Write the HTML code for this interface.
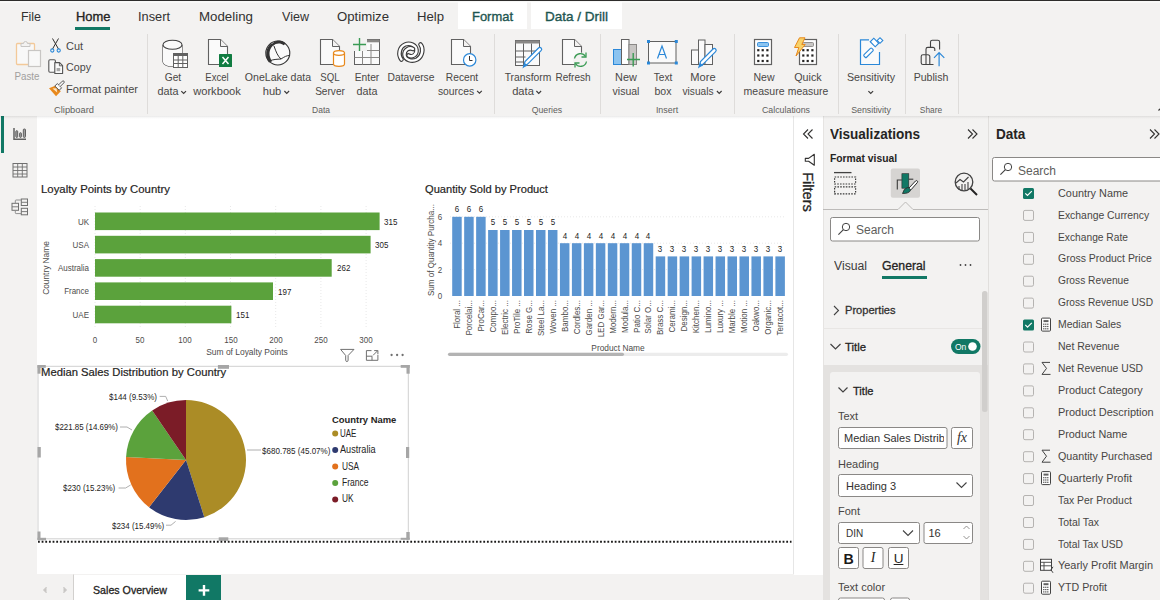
<!DOCTYPE html><html><head><meta charset="utf-8"><style>
html,body{margin:0;padding:0}
body{width:1160px;height:600px;overflow:hidden;position:relative;background:#f3f2f1;font-family:"Liberation Sans", sans-serif}
.t{position:absolute;line-height:0;white-space:nowrap}
.r{position:absolute;display:block}
</style></head><body>
<div class="r" style="left:0px;top:0px;width:1160px;height:1.4px;background:#2d2c2b;"></div>
<div class="r" style="left:0px;top:1.4px;width:1160px;height:1.2px;background:#f8f8f7;"></div>
<div class="r" style="left:75px;top:27px;width:35px;height:3px;background:#117865;"></div>
<div class="r" style="left:458px;top:2px;width:69px;height:27px;background:#ffffff;"></div>
<div class="r" style="left:531px;top:2px;width:90.5px;height:27px;background:#ffffff;"></div>
<div class="r" style="left:147px;top:34px;width:1px;height:80px;background:#dedcda;"></div>
<div class="r" style="left:494px;top:34px;width:1px;height:80px;background:#dedcda;"></div>
<div class="r" style="left:600px;top:34px;width:1px;height:80px;background:#dedcda;"></div>
<div class="r" style="left:734px;top:34px;width:1px;height:80px;background:#dedcda;"></div>
<div class="r" style="left:838px;top:34px;width:1px;height:80px;background:#dedcda;"></div>
<div class="r" style="left:904.5px;top:34px;width:1px;height:80px;background:#dedcda;"></div>
<div class="r" style="left:958px;top:34px;width:1px;height:80px;background:#dedcda;"></div>
<svg class="r" style="left:0;top:0" width="1160" height="120" viewBox="0 0 1160 120"><rect x="16.5" y="43.5" width="18" height="21" rx="1" fill="#f8f8f8" stroke="#f3c999" stroke-width="1.3"/><path d="M21 46.5 h9 v-3 h-2.5 a2 2 0 0 0 -4 0 h-2.5z" fill="#f3f2f1" stroke="#c8c6c4" stroke-width="1"/><rect x="28.5" y="50.5" width="12" height="16" fill="#f8f8f8" stroke="#c8c6c4" stroke-width="1.2"/><path d="M52.5 38.5 L58.5 49 M58.5 38.5 L52.5 49" stroke="#323130" stroke-width="1" fill="none"/><circle cx="52.3" cy="50.5" r="1.6" fill="none" stroke="#2b88d8" stroke-width="1.1"/><circle cx="58.7" cy="50.5" r="1.6" fill="none" stroke="#2b88d8" stroke-width="1.1"/><rect x="48.8" y="59.8" width="6.6" height="12.4" rx="1.2" fill="#fafafa" stroke="#555" stroke-width="1.1"/><path d="M54.8 62.6 H59.6 L62.6 65.6 V73.5 H54.8 Z" fill="#fafafa" stroke="#555" stroke-width="1.1" stroke-linejoin="round"/><path d="M59.4 62.8 V65.8 H62.4" fill="none" stroke="#555" stroke-width="0.9"/><rect x="56.6" y="68" width="3.6" height="3.2" fill="#a8a8a8"/><path d="M49 88.2 L55.2 85.8 L60.8 91.2 L56 96.2 Z" fill="#e8891c"/><path d="M52.5 88.5 L56.5 88.2 L57.2 92.5 Z" fill="#fde7c8"/><path d="M54.8 86 L57.3 83.6 L61.6 87.8 L59.2 90.3 Z" fill="#fafafa" stroke="#555" stroke-width="1"/><path d="M58.7 84.8 L62.3 81.2 a1.1 1.1 0 0 1 1.6 1.6 L60.3 86.4" fill="#fafafa" stroke="#555" stroke-width="1"/><path d="M163 45 v17 a9.5 4.5 0 0 0 10 4.3 M182 45 v8" fill="none" stroke="#424242" stroke-width="1.1"/><path d="M163 45 v17 a9.5 4.5 0 0 0 10 4.3 V53 H182 V45 z" fill="#fafafa"/><ellipse cx="172.5" cy="44.8" rx="9.5" ry="4.5" fill="#fafafa" stroke="#424242" stroke-width="1.1"/><rect x="173.5" y="53.5" width="14" height="14" fill="#fff" stroke="#616161" stroke-width="1"/><rect x="173.5" y="53.5" width="14" height="2.5" fill="#616161"/><path d="M178.2 56 v11.5 M182.8 56 v11.5 M173.5 60 h14 M173.5 63.5 h14" stroke="#616161" stroke-width="1"/><path d="M208.5 39.5 h12 l7 7 v18 h-19 z" fill="#fafafa" stroke="#616161" stroke-width="1.1"/><path d="M220.5 39.5 v7 h7" fill="#f3f2f1" stroke="#616161" stroke-width="1"/><rect x="219" y="54" width="13" height="13" rx="0.5" fill="#107c41"/><path d="M222.5 57 L228.5 64 M228.5 57 L222.5 64" stroke="#fff" stroke-width="1.5"/><circle cx="277.8" cy="53" r="12" fill="#fafafa" stroke="#333" stroke-width="1.1"/><path d="M271.5 43.5 C265.5 47 264.5 57 269 62.5 L272.2 61.3 C268.5 56.5 268.5 49.5 273 45.5 Z" fill="#333"/><path d="M271.5 44.5 C275 39.5 282.5 39 285.5 43.5 L283.8 45.2 C280.5 42.8 276 42.8 273 46 Z" fill="#333"/><path d="M274 46 C276 52 278 56.5 281 59 M269.5 61 C273 59.3 277 59.3 281 59 C284 57 287 55.3 289.6 55.5" fill="none" stroke="#333" stroke-width="1"/><path d="M320.5 39.5 h12 l7 7 v18 h-19 z" fill="#fafafa" stroke="#616161" stroke-width="1.1"/><path d="M332.5 39.5 v7 h7" fill="#f3f2f1" stroke="#616161" stroke-width="1"/><path d="M333.5 53 v11 a5.5 2.3 0 0 0 11 0 v-11 z" fill="#fff" stroke="#e8891c" stroke-width="1.2"/><ellipse cx="339" cy="53" rx="5.5" ry="2.3" fill="#fff" stroke="#e8891c" stroke-width="1.2"/><rect x="354.5" y="39.5" width="25" height="25" fill="#fafafa" stroke="#616161" stroke-width="1"/><rect x="362" y="39.5" width="17.5" height="2.8" fill="#8a8886"/><path d="M362.5 44 v20.5 M371 44 v20.5 M354.5 50.5 h25 M354.5 57.5 h25" stroke="#8a8886" stroke-width="1"/><rect x="351" y="37" width="16" height="14" fill="#f3f2f1"/><path d="M353 44.5 h13 M359.5 38 v13" stroke="#3a9b54" stroke-width="1.4"/><path d="M401.5 59.5 C398 55 399 47 405 44.5 C410 42.5 416 45 416.5 50 C417 55 412 57.5 408.5 55.5" fill="none" stroke="#3a3a3a" stroke-width="4.6" stroke-linecap="round"/><path d="M401.5 59.5 C398 55 399 47 405 44.5 C410 42.5 416 45 416.5 50 C417 55 412 57.5 408.5 55.5" fill="none" stroke="#fff" stroke-width="2.4" stroke-linecap="round"/><path d="M420.5 44.5 C423.5 48 423 56 417 59.5 C412 62 405 60 404.5 55 C404 50 409 47 413 49" fill="none" stroke="#3a3a3a" stroke-width="4.6" stroke-linecap="round"/><path d="M420.5 44.5 C423.5 48 423 56 417 59.5 C412 62 405 60 404.5 55 C404 50 409 47 413 49" fill="none" stroke="#fff" stroke-width="2.4" stroke-linecap="round"/><path d="M451.5 39.5 h12 l7 7 v18 h-19 z" fill="#fafafa" stroke="#616161" stroke-width="1.1"/><path d="M463.5 39.5 v7 h7" fill="#f3f2f1" stroke="#616161" stroke-width="1"/><circle cx="469.7" cy="59.9" r="6.2" fill="#fff" stroke="#2b88d8" stroke-width="1.2"/><path d="M469.5 56 v4.5 h3" fill="none" stroke="#333" stroke-width="1"/><rect x="515.5" y="40.5" width="24" height="25" fill="#fafafa" stroke="#616161" stroke-width="1"/><rect x="515.5" y="40.5" width="24" height="3" fill="#8a8886"/><path d="M523.5 43.5 v22 M531.5 43.5 v12 M515.5 51 h24 M515.5 57 h10 M515.5 62 h8" stroke="#616161" stroke-width="1"/><path d="M523.5 67 l1.5 -5.5 l13.5 -13.5 a1.8 1.8 0 0 1 2.6 2.6 l-13.5 13.5 z" fill="#fff" stroke="#2b88d8" stroke-width="1.2"/><path d="M523.5 67 l1.2 -4.2 l3 3z" fill="#2b88d8"/><path d="M562.5 39.5 h12 l7 7 v18 h-19 z" fill="#fafafa" stroke="#616161" stroke-width="1.1"/><path d="M574.5 39.5 v7 h7" fill="#f3f2f1" stroke="#616161" stroke-width="1"/><circle cx="580.5" cy="60" r="7.5" fill="#f3f2f1"/><path d="M574.5 58.5 a6 6 0 0 1 11 -2 M586.5 61.5 a6 6 0 0 1 -11 2" fill="none" stroke="#3a9b54" stroke-width="1.3"/><path d="M586 52.5 v4.5 h-4.5 M575 67.5 v-4.5 h4.5" fill="none" stroke="#3a9b54" stroke-width="1.3"/><rect x="613.5" y="49.5" width="8" height="15" fill="#8cc4f0" stroke="#2b88d8" stroke-width="1"/><rect x="621.5" y="39.5" width="7.5" height="25" fill="#fff" stroke="#616161" stroke-width="1"/><rect x="629" y="44.5" width="7.5" height="20" fill="#c8c6c4" stroke="#8a8886" stroke-width="1"/><rect x="626" y="52" width="14" height="14" fill="#f3f2f1" opacity="0"/><path d="M627 59.5 h13 M633.2 53 v13.5" stroke="#3a9b54" stroke-width="1.4"/><rect x="648.5" y="41.5" width="27.5" height="21.5" fill="#fafafa" stroke="#616161" stroke-width="1"/><rect x="647" y="40" width="3" height="3" fill="#2b88d8"/><rect x="674.8" y="40" width="3" height="3" fill="#2b88d8"/><rect x="647" y="61.5" width="3" height="3" fill="#2b88d8"/><rect x="674.8" y="61.5" width="3" height="3" fill="#2b88d8"/><path d="M657.5 58.5 L662 46 L666.5 58.5 M659 54.5 h6" fill="none" stroke="#2b88d8" stroke-width="1.2"/><rect x="691.5" y="50" width="7" height="14.5" fill="#fafafa" stroke="#616161" stroke-width="1"/><rect x="698.5" y="40" width="6.5" height="24.5" fill="#fafafa" stroke="#616161" stroke-width="1"/><rect x="705" y="44.5" width="7.5" height="20" fill="#fafafa" stroke="#616161" stroke-width="1"/><path d="M699 67 l1.5 -5.5 l12.5 -12.5 a1.8 1.8 0 0 1 2.6 2.6 l-12.5 12.5 z" fill="#fff" stroke="#2b88d8" stroke-width="1.2"/><path d="M699 67 l1.2 -4.2 l3 3z" fill="#2b88d8"/><rect x="754.5" y="39.5" width="17" height="25" fill="#fff" stroke="#616161" stroke-width="1.2"/><rect x="757.5" y="42.5" width="11" height="4" rx="1" fill="#8cc4f0" stroke="#2b88d8" stroke-width="0.9"/><rect x="757.1999999999999" y="49.1" width="2.2" height="2.2" fill="#252423"/><rect x="761.6" y="49.1" width="2.2" height="2.2" fill="#252423"/><rect x="766.3" y="49.1" width="2.2" height="2.2" fill="#252423"/><rect x="757.1999999999999" y="54.4" width="2.2" height="2.2" fill="#252423"/><rect x="761.6" y="54.4" width="2.2" height="2.2" fill="#252423"/><rect x="766.3" y="54.4" width="2.2" height="2.2" fill="#252423"/><rect x="757.1999999999999" y="59.9" width="2.2" height="2.2" fill="#252423"/><rect x="761.6" y="59.9" width="2.2" height="2.2" fill="#252423"/><rect x="766.3" y="59.9" width="2.2" height="2.2" fill="#252423"/><rect x="799.5" y="39.5" width="17" height="25" fill="#fff" stroke="#616161" stroke-width="1.2"/><rect x="802.5" y="42.5" width="11" height="4" rx="1" fill="#c8c6c4" stroke="#8a8886" stroke-width="0.9"/><rect x="802.1999999999999" y="49.1" width="2.2" height="2.2" fill="#252423"/><rect x="806.6" y="49.1" width="2.2" height="2.2" fill="#252423"/><rect x="811.3" y="49.1" width="2.2" height="2.2" fill="#252423"/><rect x="802.1999999999999" y="54.4" width="2.2" height="2.2" fill="#252423"/><rect x="806.6" y="54.4" width="2.2" height="2.2" fill="#252423"/><rect x="811.3" y="54.4" width="2.2" height="2.2" fill="#252423"/><rect x="802.1999999999999" y="59.9" width="2.2" height="2.2" fill="#252423"/><rect x="806.6" y="59.9" width="2.2" height="2.2" fill="#252423"/><rect x="811.3" y="59.9" width="2.2" height="2.2" fill="#252423"/><path d="M799.5 37.8 L805 37.8 L801.8 44.5 L805.2 44.5 L796 56 L798.8 47.5 L794.5 47.5 z" fill="#f7d26a" stroke="#e8891c" stroke-width="1" stroke-linejoin="round"/><path d="M869 39.8 H860.5 V64.5 H879.5 V52" fill="#fafafa" stroke="#2b88d8" stroke-width="1.2"/><path d="M864.5 50 l6 -6 l4.5 4.5 l-6 6 z" fill="#fafafa"/><rect x="863" y="51" width="11" height="3.6" rx="1" transform="rotate(-45 868.5 52.8)" fill="#fff" stroke="#2b88d8" stroke-width="1.1"/><rect x="871" y="40" width="7" height="5" transform="rotate(45 874.5 42.5)" fill="#fff" stroke="#2b88d8" stroke-width="1.2"/><rect x="878" y="38.5" width="4" height="4" transform="rotate(45 880 40.5)" fill="#fff" stroke="#2b88d8" stroke-width="1.1"/><path d="M930.5 52 V42 a1.8 1.8 0 0 1 1.8 -1.8 H937.8 a1.8 1.8 0 0 1 1.8 1.8 V49.5" fill="none" stroke="#424242" stroke-width="1.1"/><path d="M926 55 V49.2 a1.8 1.8 0 0 1 1.8 -1.8 H933 a1.8 1.8 0 0 1 1.8 1.8 V51" fill="#f3f2f1" stroke="#424242" stroke-width="1.1"/><path d="M933.5 64.5 H923 a1.8 1.8 0 0 1 -1.8 -1.8 V56.6 a1.8 1.8 0 0 1 1.8 -1.8 H928 a1.8 1.8 0 0 1 1.8 1.8 V64.5" fill="#f3f2f1" stroke="#424242" stroke-width="1.1"/><path d="M926 55 V64.5" stroke="#424242" stroke-width="1.1"/><path d="M939.1 66.2 V53 M934 57.8 L939.1 52.6 L944.3 57.8" fill="none" stroke="#2b88d8" stroke-width="1.2"/><path d="M181.3 91.10000000000001 l2.35 2.35 l2.35 -2.35" fill="none" stroke="#3b3a39" stroke-width="1.15"/><path d="M284.4 91.0 l2.35 2.35 l2.35 -2.35" fill="none" stroke="#3b3a39" stroke-width="1.15"/><path d="M477.09999999999997 90.9 l2.35 2.35 l2.35 -2.35" fill="none" stroke="#3b3a39" stroke-width="1.15"/><path d="M536.4 91.0 l2.35 2.35 l2.35 -2.35" fill="none" stroke="#3b3a39" stroke-width="1.15"/><path d="M716.9 91.0 l2.35 2.35 l2.35 -2.35" fill="none" stroke="#3b3a39" stroke-width="1.15"/><path d="M868.4 91.10000000000001 l2.35 2.35 l2.35 -2.35" fill="none" stroke="#3b3a39" stroke-width="1.15"/></svg>
<div class="r" style="left:0px;top:116px;width:37px;height:458px;background:#f3f2f1;"></div>
<div class="r" style="left:1px;top:116px;width:3px;height:37px;background:#117865;"></div>
<svg class="r" style="left:0;top:0" width="40" height="230" viewBox="0 0 40 230"><path d="M14 128 v11.3 h12" fill="none" stroke="#616161" stroke-width="1.5"/><rect x="15.8" y="130.7" width="1.9" height="6.7" rx="0.8" fill="#a0a0a0" stroke="#555" stroke-width="0.9"/><rect x="19.6" y="132.7" width="1.8" height="4.7" rx="0.8" fill="#a0a0a0" stroke="#555" stroke-width="0.9"/><rect x="23.3" y="129" width="2.2" height="8.4" rx="0.9" fill="#a0a0a0" stroke="#555" stroke-width="0.9"/><rect x="13" y="163.5" width="14" height="13.5" fill="none" stroke="#707070" stroke-width="1"/><path d="M13 167 h14 M13 170.5 h14 M13 174 h14 M17.7 163.5 v13.5 M22.3 163.5 v13.5" stroke="#707070" stroke-width="0.9"/><rect x="12" y="203.3" width="6.5" height="7" fill="none" stroke="#707070" stroke-width="1"/><path d="M12 206.8 h6.5" stroke="#707070" stroke-width="0.9"/><rect x="21.3" y="199" width="6.2" height="6.5" fill="none" stroke="#707070" stroke-width="1"/><path d="M21.3 202.3 h6.2" stroke="#707070" stroke-width="0.9"/><rect x="21.3" y="208.3" width="6.2" height="6.5" fill="none" stroke="#707070" stroke-width="1"/><path d="M21.3 211.6 h6.2" stroke="#707070" stroke-width="0.9"/><path d="M15.3 203.3 v-2.5 q0 -0.8 0.8 -0.8 h5.2 M15.3 210.3 v2.5 q0 0.8 0.8 0.8 h5.2" fill="none" stroke="#909090" stroke-width="1"/></svg>
<div class="r" style="left:37px;top:116px;width:756px;height:458px;background:#ffffff;"></div>
<div class="r" style="left:793px;top:116px;width:1px;height:458px;background:#e6e6e6;"></div>
<svg class="r" style="left:0;top:0" width="1160" height="600" viewBox="0 0 1160 600"><line x1="95.0" y1="206" x2="95.0" y2="328" stroke="#e8e8e8" stroke-width="1" stroke-dasharray="1 2"/><line x1="140.2" y1="206" x2="140.2" y2="328" stroke="#e8e8e8" stroke-width="1" stroke-dasharray="1 2"/><line x1="185.3" y1="206" x2="185.3" y2="328" stroke="#e8e8e8" stroke-width="1" stroke-dasharray="1 2"/><line x1="230.5" y1="206" x2="230.5" y2="328" stroke="#e8e8e8" stroke-width="1" stroke-dasharray="1 2"/><line x1="275.7" y1="206" x2="275.7" y2="328" stroke="#e8e8e8" stroke-width="1" stroke-dasharray="1 2"/><line x1="320.9" y1="206" x2="320.9" y2="328" stroke="#e8e8e8" stroke-width="1" stroke-dasharray="1 2"/><line x1="366.1" y1="206" x2="366.1" y2="328" stroke="#e8e8e8" stroke-width="1" stroke-dasharray="1 2"/><rect x="95.0" y="212.5" width="284.6" height="17.6" fill="#5ba23c"/><rect x="95.0" y="235.8" width="275.6" height="17.6" fill="#5ba23c"/><rect x="95.0" y="259.1" width="236.7" height="17.6" fill="#5ba23c"/><rect x="95.0" y="282.4" width="178.0" height="17.6" fill="#5ba23c"/><rect x="95.0" y="305.7" width="136.4" height="17.6" fill="#5ba23c"/><line x1="450" y1="269.6" x2="786" y2="269.6" stroke="#e8e8e8" stroke-width="1" stroke-dasharray="1 2"/><line x1="450" y1="243.2" x2="786" y2="243.2" stroke="#e8e8e8" stroke-width="1" stroke-dasharray="1 2"/><line x1="450" y1="216.8" x2="786" y2="216.8" stroke="#e8e8e8" stroke-width="1" stroke-dasharray="1 2"/><rect x="452.20" y="216.8" width="9.5" height="79.2" fill="#5b95d1"/><rect x="464.17" y="216.8" width="9.5" height="79.2" fill="#5b95d1"/><rect x="476.14" y="216.8" width="9.5" height="79.2" fill="#5b95d1"/><rect x="488.11" y="230.0" width="9.5" height="66.0" fill="#5b95d1"/><rect x="500.08" y="230.0" width="9.5" height="66.0" fill="#5b95d1"/><rect x="512.05" y="230.0" width="9.5" height="66.0" fill="#5b95d1"/><rect x="524.02" y="230.0" width="9.5" height="66.0" fill="#5b95d1"/><rect x="535.99" y="230.0" width="9.5" height="66.0" fill="#5b95d1"/><rect x="547.96" y="230.0" width="9.5" height="66.0" fill="#5b95d1"/><rect x="559.93" y="243.2" width="9.5" height="52.8" fill="#5b95d1"/><rect x="571.90" y="243.2" width="9.5" height="52.8" fill="#5b95d1"/><rect x="583.87" y="243.2" width="9.5" height="52.8" fill="#5b95d1"/><rect x="595.84" y="243.2" width="9.5" height="52.8" fill="#5b95d1"/><rect x="607.81" y="243.2" width="9.5" height="52.8" fill="#5b95d1"/><rect x="619.78" y="243.2" width="9.5" height="52.8" fill="#5b95d1"/><rect x="631.75" y="243.2" width="9.5" height="52.8" fill="#5b95d1"/><rect x="643.72" y="243.2" width="9.5" height="52.8" fill="#5b95d1"/><rect x="655.69" y="256.4" width="9.5" height="39.6" fill="#5b95d1"/><rect x="667.66" y="256.4" width="9.5" height="39.6" fill="#5b95d1"/><rect x="679.63" y="256.4" width="9.5" height="39.6" fill="#5b95d1"/><rect x="691.60" y="256.4" width="9.5" height="39.6" fill="#5b95d1"/><rect x="703.57" y="256.4" width="9.5" height="39.6" fill="#5b95d1"/><rect x="715.54" y="256.4" width="9.5" height="39.6" fill="#5b95d1"/><rect x="727.51" y="256.4" width="9.5" height="39.6" fill="#5b95d1"/><rect x="739.48" y="256.4" width="9.5" height="39.6" fill="#5b95d1"/><rect x="751.45" y="256.4" width="9.5" height="39.6" fill="#5b95d1"/><rect x="763.42" y="256.4" width="9.5" height="39.6" fill="#5b95d1"/><rect x="775.39" y="256.4" width="9.5" height="39.6" fill="#5b95d1"/><rect x="448" y="352.7" width="340" height="3.2" rx="1.6" fill="#ececec"/><rect x="448" y="352.7" width="176" height="3.2" rx="1.6" fill="#b3b3b3"/><path d="M186.0 460.0 L186.00 400.00 A60.0 60.0 0 0 1 204.31 517.14 Z" fill="#ab8c26"/><path d="M186.0 460.0 L204.31 517.14 A60.0 60.0 0 0 1 149.07 507.28 Z" fill="#2e3a6f"/><path d="M186.0 460.0 L149.07 507.28 A60.0 60.0 0 0 1 126.07 457.05 Z" fill="#e2711d"/><path d="M186.0 460.0 L126.07 457.05 A60.0 60.0 0 0 1 152.18 410.44 Z" fill="#5ba23c"/><path d="M186.0 460.0 L152.18 410.44 A60.0 60.0 0 0 1 186.00 400.00 Z" fill="#7b1c27"/><path d="M159.7 396.4 h6 l2 4.6 M120 427 h7 l5 3 M118.6 488 h7 l5 -3 M166 525.2 h5 l4.6 -3.8 M247 450 h14" fill="none" stroke="#9a9a9a" stroke-width="0.8"/><circle cx="335.2" cy="433.6" r="3" fill="#ab8c26"/><circle cx="335.2" cy="450.1" r="3" fill="#2e3a6f"/><circle cx="335.2" cy="466.5" r="3" fill="#e2711d"/><circle cx="335.2" cy="483.0" r="3" fill="#5ba23c"/><circle cx="335.2" cy="499.4" r="3" fill="#7b1c27"/><rect x="38" y="366.3" width="370.3" height="172.5" fill="none" stroke="#d0d0d0" stroke-width="1"/><rect x="37.5" y="365" width="8.3" height="2.8" fill="#a6a6a6"/><rect x="37.5" y="365" width="3" height="8.7" fill="#a6a6a6"/><rect x="400.7" y="365" width="9" height="2.8" fill="#a6a6a6"/><rect x="406.5" y="365" width="3.2" height="8.7" fill="#a6a6a6"/><rect x="37.5" y="531.5" width="3" height="8.5" fill="#a6a6a6"/><rect x="37.5" y="537.8" width="8.5" height="2.5" fill="#a6a6a6"/><rect x="406.3" y="532" width="3.4" height="7.6" fill="#a6a6a6"/><rect x="400.7" y="537.8" width="9" height="2" fill="#a6a6a6"/><rect x="217.9" y="365" width="11.1" height="3.8" fill="#a6a6a6"/><rect x="218.7" y="537.3" width="9.6" height="3.5" fill="#a6a6a6"/><rect x="37.5" y="447" width="3.3" height="10.5" fill="#a6a6a6"/><rect x="406" y="447" width="3.2" height="11" fill="#a6a6a6"/><line x1="38" y1="541.8" x2="791.5" y2="541.8" stroke="#1b1a19" stroke-width="1.9" stroke-dasharray="1.8 1.85"/><path d="M340.6 349.4 H354 L348.1 355.5 V360.3 a1.2 1.2 0 0 1 -2.4 0 V355.5 Z" fill="none" stroke="#707070" stroke-width="1" stroke-linejoin="round"/><path d="M371.5 350.6 H366.4 V360.3 H377.9 V355 M366.4 356.2 H372 V360.3 M373 355.4 L377.6 350.8 M374.2 350.6 H377.9 V354.3" fill="none" stroke="#707070" stroke-width="1"/><circle cx="391.6" cy="355" r="1.15" fill="#707070"/><circle cx="397.1" cy="355" r="1.15" fill="#707070"/><circle cx="402.6" cy="355" r="1.15" fill="#707070"/></svg>
<div class="r" style="left:794px;top:116px;width:29px;height:484px;background:#ffffff;"></div>
<div class="r" style="left:823px;top:116px;width:165px;height:484px;background:#f3f2f1;"></div>
<div class="r" style="left:822.5px;top:116px;width:1px;height:484px;background:#e6e4e2;"></div>
<div class="r" style="left:882px;top:276px;width:45px;height:2.5px;background:#117865;"></div>
<div class="r" style="left:823px;top:328px;width:159px;height:1px;background:#e8e6e4;"></div>
<div class="r" style="left:823px;top:365px;width:165px;height:235px;background:#e4e2e0;"></div>
<div class="r" style="left:988px;top:116px;width:172px;height:484px;background:#f3f2f1;"></div>
<div class="r" style="left:988px;top:116px;width:1px;height:484px;background:#e1dfdd;"></div>
<svg class="r" style="left:0;top:0" width="1160" height="600" viewBox="0 0 1160 600"><path d="M808 129.5 l-4.5 4.5 l4.5 4.5 M812.5 129.5 l-4.5 4.5 l4.5 4.5" fill="none" stroke="#323130" stroke-width="1.1"/><path d="M814.3 154.3 V165.3 L808.6 161.2 H805.3 V158.4 H808.6 Z" fill="none" stroke="#323130" stroke-width="1.1" stroke-linejoin="round"/><path d="M968 129.5 l4.5 4.5 l-4.5 4.5 M972.5 129.5 l4.5 4.5 l-4.5 4.5" fill="none" stroke="#323130" stroke-width="1.1"/><path d="M834 172.6 h17.5" stroke="#424242" stroke-width="1.3"/><rect x="834.6" y="177" width="21" height="7" fill="none" stroke="#3a3a3a" stroke-width="1.2" stroke-dasharray="1.6 1.2"/><rect x="834.6" y="186.8" width="21" height="7" fill="none" stroke="#3a3a3a" stroke-width="1.2" stroke-dasharray="1.6 1.2"/><rect x="890.8" y="168.5" width="29.2" height="29.2" rx="2" fill="#d6d4d2"/><path d="M897.3 189.5 v-9.5 h4.5" fill="none" stroke="#3a3a3a" stroke-width="1.1"/><rect x="901.9" y="173.7" width="6.9" height="14.5" fill="#117865" stroke="#2a2a2a" stroke-width="0.6"/><path d="M908.8 179.2 h4.5" fill="none" stroke="#3a3a3a" stroke-width="1.1"/><path d="M909 188 l6.5 -7 a1.2 1.2 0 0 1 1.8 1.6 l-6.3 7.2" fill="#fff" stroke="#2a2a2a" stroke-width="1"/><path d="M902.5 193.5 q1 -5 5.5 -6.2 l2.8 2.5 q-1.5 4 -8.3 3.7z" fill="#117865" stroke="#2a2a2a" stroke-width="0.8"/><circle cx="964" cy="182" r="8.8" fill="none" stroke="#424242" stroke-width="1.3"/><path d="M956 183 l4 -3.5 l3.5 2.5 l5 -5 M959 186 v4 M962 184 v6 M965 184 v6 M968 182 v7" fill="none" stroke="#424242" stroke-width="1.1"/><path d="M970.5 188.5 l6.5 6.5" stroke="#252423" stroke-width="2"/><path d="M823 209.5 H898 l7.5 -7.5 l7.5 7.5 H988" fill="none" stroke="#bdbbb9" stroke-width="1"/><rect x="830.5" y="217.5" width="149" height="23.5" rx="2" fill="#ffffff" stroke="#8a8886" stroke-width="1"/><circle cx="846" cy="227" r="3.7" fill="none" stroke="#424242" stroke-width="1"/><path d="M843.4 229.6 l-5 5" stroke="#424242" stroke-width="1.1"/><circle cx="960.5" cy="265" r="0.9" fill="#424242"/><circle cx="965.5" cy="265" r="0.9" fill="#424242"/><circle cx="970.5" cy="265" r="0.9" fill="#424242"/><path d="M834 306 l4.5 4.5 l-4.5 4.5" fill="none" stroke="#424242" stroke-width="1.1"/><path d="M830.5 344 l5 5 l5 -5" fill="none" stroke="#424242" stroke-width="1.2"/><rect x="951" y="339" width="29.5" height="15" rx="7.5" fill="#117865"/><circle cx="972.5" cy="346.5" r="4.3" fill="#fff"/><rect x="830" y="372" width="150" height="240" rx="3" fill="#f3f2f1"/><rect x="982" y="291" width="5.5" height="121" rx="2.5" fill="#d0cecc"/><path d="M838.5 387.5 l4.5 4.5 l4.5 -4.5" fill="none" stroke="#424242" stroke-width="1.2"/><rect x="838.5" y="427.5" width="108.5" height="21" rx="2" fill="#fff" stroke="#8a8886" stroke-width="1"/><rect x="951.5" y="427.5" width="21" height="21" rx="2" fill="#fff" stroke="#8a8886" stroke-width="1"/><rect x="838.5" y="474.5" width="134" height="22" rx="2" fill="#fff" stroke="#8a8886" stroke-width="1"/><path d="M956.5 482.5 l5 5 l5 -5" fill="none" stroke="#424242" stroke-width="1.1"/><rect x="838.5" y="522.5" width="81" height="21" rx="2" fill="#fff" stroke="#8a8886" stroke-width="1"/><path d="M903 530.5 l5 5 l5 -5" fill="none" stroke="#424242" stroke-width="1.1"/><rect x="924" y="522.5" width="48.5" height="21" rx="2" fill="#fff" stroke="#8a8886" stroke-width="1"/><path d="M963.5 529 l3 -3 l3 3 M963.5 536 l3 3 l3 -3" fill="none" stroke="#8a8886" stroke-width="0.9"/><rect x="838.5" y="547.5" width="20" height="21" rx="2" fill="#fff" stroke="#8a8886" stroke-width="1"/><rect x="863" y="547.5" width="20" height="21" rx="2" fill="#fff" stroke="#8a8886" stroke-width="1"/><rect x="888.5" y="547.5" width="20" height="21" rx="2" fill="#fff" stroke="#8a8886" stroke-width="1"/><rect x="838.5" y="598" width="46" height="10" rx="2" fill="#fff" stroke="#8a8886" stroke-width="1"/><rect x="890.5" y="598" width="19" height="10" rx="2" fill="#fff" stroke="#8a8886" stroke-width="1"/><path d="M1150 129.5 l4.5 4.5 l-4.5 4.5 M1154.5 129.5 l4.5 4.5 l-4.5 4.5" fill="none" stroke="#323130" stroke-width="1.1"/><rect x="992.5" y="157.5" width="180" height="23.5" rx="2" fill="#ffffff" stroke="#8a8886" stroke-width="1"/><circle cx="1008" cy="167" r="3.7" fill="none" stroke="#424242" stroke-width="1"/><path d="M1005.4 169.6 l-5 5" stroke="#424242" stroke-width="1.1"/><rect x="1023" y="188.0" width="11" height="11" rx="1.5" fill="#117865"/><path d="M1025.3 193.3 l2.2 2.2 l4.3 -4.3" fill="none" stroke="#fff" stroke-width="1.2"/><rect x="1023.5" y="210.4" width="10" height="10" rx="1.5" fill="none" stroke="#b5b3b1" stroke-width="1"/><rect x="1023.5" y="232.4" width="10" height="10" rx="1.5" fill="none" stroke="#b5b3b1" stroke-width="1"/><rect x="1023.5" y="254.3" width="10" height="10" rx="1.5" fill="none" stroke="#b5b3b1" stroke-width="1"/><rect x="1023.5" y="276.2" width="10" height="10" rx="1.5" fill="none" stroke="#b5b3b1" stroke-width="1"/><rect x="1023.5" y="298.1" width="10" height="10" rx="1.5" fill="none" stroke="#b5b3b1" stroke-width="1"/><rect x="1023" y="319.6" width="11" height="11" rx="1.5" fill="#117865"/><path d="M1025.3 324.9 l2.2 2.2 l4.3 -4.3" fill="none" stroke="#fff" stroke-width="1.2"/><rect x="1041.5" y="318.1" width="9" height="13" rx="1" fill="#fff" stroke="#424242" stroke-width="1"/><rect x="1043.5" y="320.1" width="5" height="2" fill="#616161"/><rect x="1043.2" y="323.6" width="1.2" height="1.2" fill="#424242"/><rect x="1045.2" y="323.6" width="1.2" height="1.2" fill="#424242"/><rect x="1047.2" y="323.6" width="1.2" height="1.2" fill="#424242"/><rect x="1043.2" y="325.9" width="1.2" height="1.2" fill="#424242"/><rect x="1045.2" y="325.9" width="1.2" height="1.2" fill="#424242"/><rect x="1047.2" y="325.9" width="1.2" height="1.2" fill="#424242"/><rect x="1043.2" y="328.2" width="1.2" height="1.2" fill="#424242"/><rect x="1045.2" y="328.2" width="1.2" height="1.2" fill="#424242"/><rect x="1047.2" y="328.2" width="1.2" height="1.2" fill="#424242"/><rect x="1023.5" y="342.0" width="10" height="10" rx="1.5" fill="none" stroke="#b5b3b1" stroke-width="1"/><rect x="1023.5" y="363.9" width="10" height="10" rx="1.5" fill="none" stroke="#b5b3b1" stroke-width="1"/><path d="M1050 362.4 h-8 l4.5 6 l-4.5 6 h8.5" fill="none" stroke="#424242" stroke-width="1"/><rect x="1023.5" y="385.9" width="10" height="10" rx="1.5" fill="none" stroke="#b5b3b1" stroke-width="1"/><rect x="1023.5" y="407.8" width="10" height="10" rx="1.5" fill="none" stroke="#b5b3b1" stroke-width="1"/><rect x="1023.5" y="429.7" width="10" height="10" rx="1.5" fill="none" stroke="#b5b3b1" stroke-width="1"/><rect x="1023.5" y="451.7" width="10" height="10" rx="1.5" fill="none" stroke="#b5b3b1" stroke-width="1"/><path d="M1050 450.2 h-8 l4.5 6 l-4.5 6 h8.5" fill="none" stroke="#424242" stroke-width="1"/><rect x="1023.5" y="473.6" width="10" height="10" rx="1.5" fill="none" stroke="#b5b3b1" stroke-width="1"/><rect x="1041.5" y="471.6" width="9" height="13" rx="1" fill="#fff" stroke="#424242" stroke-width="1"/><rect x="1043.5" y="473.6" width="5" height="2" fill="#616161"/><rect x="1043.2" y="477.1" width="1.2" height="1.2" fill="#424242"/><rect x="1045.2" y="477.1" width="1.2" height="1.2" fill="#424242"/><rect x="1047.2" y="477.1" width="1.2" height="1.2" fill="#424242"/><rect x="1043.2" y="479.4" width="1.2" height="1.2" fill="#424242"/><rect x="1045.2" y="479.4" width="1.2" height="1.2" fill="#424242"/><rect x="1047.2" y="479.4" width="1.2" height="1.2" fill="#424242"/><rect x="1043.2" y="481.7" width="1.2" height="1.2" fill="#424242"/><rect x="1045.2" y="481.7" width="1.2" height="1.2" fill="#424242"/><rect x="1047.2" y="481.7" width="1.2" height="1.2" fill="#424242"/><rect x="1023.5" y="495.5" width="10" height="10" rx="1.5" fill="none" stroke="#b5b3b1" stroke-width="1"/><rect x="1023.5" y="517.5" width="10" height="10" rx="1.5" fill="none" stroke="#b5b3b1" stroke-width="1"/><rect x="1023.5" y="539.4" width="10" height="10" rx="1.5" fill="none" stroke="#b5b3b1" stroke-width="1"/><rect x="1023.5" y="561.3" width="10" height="10" rx="1.5" fill="none" stroke="#b5b3b1" stroke-width="1"/><rect x="1040.5" y="559.3" width="11" height="11" fill="#fff" stroke="#424242" stroke-width="1"/><path d="M1040.5 562.3 h11 M1040.5 565.8 h11 M1044 562.3 v8" stroke="#424242" stroke-width="0.9"/><path d="M1053 566.8 l-2 3 l2 3" fill="none" stroke="#424242" stroke-width="1"/><rect x="1023.5" y="583.2" width="10" height="10" rx="1.5" fill="none" stroke="#b5b3b1" stroke-width="1"/><rect x="1041.5" y="581.2" width="9" height="13" rx="1" fill="#fff" stroke="#424242" stroke-width="1"/><rect x="1043.5" y="583.2" width="5" height="2" fill="#616161"/><rect x="1043.2" y="586.7" width="1.2" height="1.2" fill="#424242"/><rect x="1045.2" y="586.7" width="1.2" height="1.2" fill="#424242"/><rect x="1047.2" y="586.7" width="1.2" height="1.2" fill="#424242"/><rect x="1043.2" y="589.0" width="1.2" height="1.2" fill="#424242"/><rect x="1045.2" y="589.0" width="1.2" height="1.2" fill="#424242"/><rect x="1047.2" y="589.0" width="1.2" height="1.2" fill="#424242"/><rect x="1043.2" y="591.3" width="1.2" height="1.2" fill="#424242"/><rect x="1045.2" y="591.3" width="1.2" height="1.2" fill="#424242"/><rect x="1047.2" y="591.3" width="1.2" height="1.2" fill="#424242"/></svg>
<div class="r" style="left:0px;top:574.5px;width:823px;height:25.5px;background:#f3f2f1;"></div>
<div class="r" style="left:74px;top:574.5px;width:112px;height:25.5px;background:#ffffff;"></div>
<div class="r" style="left:186px;top:575.2px;width:35.3px;height:25px;background:#117865;"></div>
<svg class="r" style="left:0;top:570px" width="240" height="30" viewBox="0 570 240 30"><path d="M46.5 587 l-3 3 l3 3" fill="#c8c6c4" stroke="#c8c6c4" stroke-width="1"/><path d="M63.5 587 l3 3 l-3 3" fill="#c8c6c4" stroke="#c8c6c4" stroke-width="1"/><path d="M73.5 574.5 v26" stroke="#d2d0ce" stroke-width="1"/><path d="M198.6 590.4 h10.7 M204 585 v10.7" stroke="#ffffff" stroke-width="2.4"/></svg>
<div class="r" style="left:0px;top:115.5px;width:1160px;height:3.5px;background:linear-gradient(rgba(0,0,0,0.09),rgba(0,0,0,0.04) 40%,rgba(0,0,0,0))"></div>
<svg class="r" style="left:1150px;top:104px" width="10" height="10" viewBox="1150 104 10 10"><path d="M1158.5 110.5 l2.5 -2.5" stroke="#323130" stroke-width="1.2"/></svg>
<div class="t" style="left:21.00px;top:17.00px;font-size:13px;color:#323130;font-weight:normal;transform:scaleX(0.9556);transform-origin:0 0;">File</div>
<div class="t" style="left:75.50px;top:17.00px;font-size:13px;color:#252423;font-weight:normal;transform:scaleX(0.9939);transform-origin:0 0;-webkit-text-stroke:0.35px #252423">Home</div>
<div class="t" style="left:138.00px;top:17.00px;font-size:13px;color:#323130;font-weight:normal;transform:scaleX(0.9846);transform-origin:0 0;">Insert</div>
<div class="t" style="left:199.00px;top:17.00px;font-size:13px;color:#323130;font-weight:normal;transform:scaleX(1.0231);transform-origin:0 0;">Modeling</div>
<div class="t" style="left:282.00px;top:17.00px;font-size:13px;color:#323130;font-weight:normal;transform:scaleX(0.9660);transform-origin:0 0;">View</div>
<div class="t" style="left:337.00px;top:17.00px;font-size:13px;color:#323130;font-weight:normal;transform:scaleX(1.0139);transform-origin:0 0;">Optimize</div>
<div class="t" style="left:417.00px;top:17.00px;font-size:13px;color:#323130;font-weight:normal;transform:scaleX(1.0107);transform-origin:0 0;">Help</div>
<div class="t" style="left:472.00px;top:17.00px;font-size:13px;color:#1d5550;font-weight:normal;transform:scaleX(0.9965);transform-origin:0 0;-webkit-text-stroke:0.35px #1d5550">Format</div>
<div class="t" style="left:545.00px;top:17.00px;font-size:13px;color:#1d5550;font-weight:normal;transform:scaleX(1.0377);transform-origin:0 0;-webkit-text-stroke:0.35px #1d5550">Data / Drill</div>
<div class="t" style="left:-123.50px;width:300px;text-align:center;top:75.96px;font-size:10.8px;color:#a19f9d;font-weight:normal;transform:scaleX(0.9060);transform-origin:50% 0;">Paste</div>
<div class="t" style="left:66.00px;top:45.52px;font-size:11.5px;color:#4a4846;font-weight:normal;transform:scaleX(0.9507);transform-origin:0 0;">Cut</div>
<div class="t" style="left:66.00px;top:67.22px;font-size:11.5px;color:#4a4846;font-weight:normal;transform:scaleX(0.9310);transform-origin:0 0;">Copy</div>
<div class="t" style="left:66.00px;top:88.82px;font-size:11.5px;color:#4a4846;font-weight:normal;transform:scaleX(0.9625);transform-origin:0 0;">Format painter</div>
<div class="t" style="left:-76.00px;width:300px;text-align:center;top:110.18px;font-size:9px;color:#605e5c;font-weight:normal;transform:scaleX(1.0384);transform-origin:50% 0;">Clipboard</div>
<div class="t" style="left:23.20px;width:300px;text-align:center;top:77.02px;font-size:11.5px;color:#4a4846;font-weight:normal;transform:scaleX(0.8858);transform-origin:50% 0;">Get</div>
<div class="t" style="left:17.70px;width:300px;text-align:center;top:90.82px;font-size:11.5px;color:#4a4846;font-weight:normal;transform:scaleX(0.9409);transform-origin:50% 0;">data</div>
<div class="t" style="left:67.20px;width:300px;text-align:center;top:77.02px;font-size:11.5px;color:#4a4846;font-weight:normal;transform:scaleX(0.8287);transform-origin:50% 0;">Excel</div>
<div class="t" style="left:67.00px;width:300px;text-align:center;top:90.82px;font-size:11.5px;color:#4a4846;font-weight:normal;transform:scaleX(0.9689);transform-origin:50% 0;">workbook</div>
<div class="t" style="left:127.50px;width:300px;text-align:center;top:77.02px;font-size:11.5px;color:#4a4846;font-weight:normal;transform:scaleX(0.9187);transform-origin:50% 0;">OneLake data</div>
<div class="t" style="left:122.00px;width:300px;text-align:center;top:90.82px;font-size:11.5px;color:#4a4846;font-weight:normal;transform:scaleX(0.9685);transform-origin:50% 0;">hub</div>
<div class="t" style="left:180.30px;width:300px;text-align:center;top:77.02px;font-size:11.5px;color:#4a4846;font-weight:normal;transform:scaleX(0.8391);transform-origin:50% 0;">SQL</div>
<div class="t" style="left:180.40px;width:300px;text-align:center;top:90.82px;font-size:11.5px;color:#4a4846;font-weight:normal;transform:scaleX(0.8769);transform-origin:50% 0;">Server</div>
<div class="t" style="left:217.00px;width:300px;text-align:center;top:77.02px;font-size:11.5px;color:#4a4846;font-weight:normal;transform:scaleX(0.8914);transform-origin:50% 0;">Enter</div>
<div class="t" style="left:217.10px;width:300px;text-align:center;top:90.82px;font-size:11.5px;color:#4a4846;font-weight:normal;transform:scaleX(0.9365);transform-origin:50% 0;">data</div>
<div class="t" style="left:260.60px;width:300px;text-align:center;top:77.02px;font-size:11.5px;color:#4a4846;font-weight:normal;transform:scaleX(0.8963);transform-origin:50% 0;">Dataverse</div>
<div class="t" style="left:311.50px;width:300px;text-align:center;top:77.02px;font-size:11.5px;color:#4a4846;font-weight:normal;transform:scaleX(0.8860);transform-origin:50% 0;">Recent</div>
<div class="t" style="left:306.00px;width:300px;text-align:center;top:90.82px;font-size:11.5px;color:#4a4846;font-weight:normal;transform:scaleX(0.8994);transform-origin:50% 0;">sources</div>
<div class="t" style="left:170.70px;width:300px;text-align:center;top:110.18px;font-size:9px;color:#605e5c;font-weight:normal;transform:scaleX(0.9456);transform-origin:50% 0;">Data</div>
<div class="t" style="left:377.60px;width:300px;text-align:center;top:77.02px;font-size:11.5px;color:#4a4846;font-weight:normal;transform:scaleX(0.8965);transform-origin:50% 0;">Transform</div>
<div class="t" style="left:372.50px;width:300px;text-align:center;top:90.82px;font-size:11.5px;color:#4a4846;font-weight:normal;transform:scaleX(0.9677);transform-origin:50% 0;">data</div>
<div class="t" style="left:422.60px;width:300px;text-align:center;top:77.02px;font-size:11.5px;color:#4a4846;font-weight:normal;transform:scaleX(0.8745);transform-origin:50% 0;">Refresh</div>
<div class="t" style="left:397.10px;width:300px;text-align:center;top:110.18px;font-size:9px;color:#605e5c;font-weight:normal;transform:scaleX(0.9651);transform-origin:50% 0;">Queries</div>
<div class="t" style="left:476.00px;width:300px;text-align:center;top:77.02px;font-size:11.5px;color:#4a4846;font-weight:normal;transform:scaleX(0.9455);transform-origin:50% 0;">New</div>
<div class="t" style="left:475.50px;width:300px;text-align:center;top:90.82px;font-size:11.5px;color:#4a4846;font-weight:normal;transform:scaleX(0.9155);transform-origin:50% 0;">visual</div>
<div class="t" style="left:512.70px;width:300px;text-align:center;top:77.02px;font-size:11.5px;color:#4a4846;font-weight:normal;transform:scaleX(0.8814);transform-origin:50% 0;">Text</div>
<div class="t" style="left:512.50px;width:300px;text-align:center;top:90.82px;font-size:11.5px;color:#4a4846;font-weight:normal;transform:scaleX(0.9182);transform-origin:50% 0;">box</div>
<div class="t" style="left:553.40px;width:300px;text-align:center;top:77.02px;font-size:11.5px;color:#4a4846;font-weight:normal;transform:scaleX(0.9649);transform-origin:50% 0;">More</div>
<div class="t" style="left:547.90px;width:300px;text-align:center;top:90.82px;font-size:11.5px;color:#4a4846;font-weight:normal;transform:scaleX(0.8824);transform-origin:50% 0;">visuals</div>
<div class="t" style="left:517.10px;width:300px;text-align:center;top:110.18px;font-size:9px;color:#605e5c;font-weight:normal;transform:scaleX(0.9867);transform-origin:50% 0;">Insert</div>
<div class="t" style="left:613.70px;width:300px;text-align:center;top:77.02px;font-size:11.5px;color:#4a4846;font-weight:normal;transform:scaleX(0.9151);transform-origin:50% 0;">New</div>
<div class="t" style="left:613.80px;width:300px;text-align:center;top:90.82px;font-size:11.5px;color:#4a4846;font-weight:normal;transform:scaleX(0.9165);transform-origin:50% 0;">measure</div>
<div class="t" style="left:657.80px;width:300px;text-align:center;top:77.02px;font-size:11.5px;color:#4a4846;font-weight:normal;transform:scaleX(0.9341);transform-origin:50% 0;">Quick</div>
<div class="t" style="left:658.00px;width:300px;text-align:center;top:90.82px;font-size:11.5px;color:#4a4846;font-weight:normal;transform:scaleX(0.9031);transform-origin:50% 0;">measure</div>
<div class="t" style="left:635.50px;width:300px;text-align:center;top:110.18px;font-size:9px;color:#605e5c;font-weight:normal;transform:scaleX(0.9795);transform-origin:50% 0;">Calculations</div>
<div class="t" style="left:720.80px;width:300px;text-align:center;top:77.02px;font-size:11.5px;color:#4a4846;font-weight:normal;transform:scaleX(0.9275);transform-origin:50% 0;">Sensitivity</div>
<div class="t" style="left:720.80px;width:300px;text-align:center;top:110.18px;font-size:9px;color:#605e5c;font-weight:normal;transform:scaleX(0.9802);transform-origin:50% 0;">Sensitivity</div>
<div class="t" style="left:780.90px;width:300px;text-align:center;top:77.02px;font-size:11.5px;color:#4a4846;font-weight:normal;transform:scaleX(0.9199);transform-origin:50% 0;">Publish</div>
<div class="t" style="left:780.80px;width:300px;text-align:center;top:110.18px;font-size:9px;color:#605e5c;font-weight:normal;transform:scaleX(0.9280);transform-origin:50% 0;">Share</div>
<div class="t" style="left:40.60px;top:188.95px;font-size:11.7px;color:#252423;font-weight:normal;transform:scaleX(0.9723);transform-origin:0 0;-webkit-text-stroke:0.2px #252423">Loyalty Points by Country</div>
<div class="t" style="left:-55.00px;width:300px;text-align:center;top:340.21px;font-size:9.5px;color:#4d4c4b;font-weight:normal;transform:scaleX(0.8400);transform-origin:50% 0;">0</div>
<div class="t" style="left:-9.82px;width:300px;text-align:center;top:340.21px;font-size:9.5px;color:#4d4c4b;font-weight:normal;transform:scaleX(0.8400);transform-origin:50% 0;">50</div>
<div class="t" style="left:35.35px;width:300px;text-align:center;top:340.21px;font-size:9.5px;color:#4d4c4b;font-weight:normal;transform:scaleX(0.8400);transform-origin:50% 0;">100</div>
<div class="t" style="left:80.53px;width:300px;text-align:center;top:340.21px;font-size:9.5px;color:#4d4c4b;font-weight:normal;transform:scaleX(0.8400);transform-origin:50% 0;">150</div>
<div class="t" style="left:125.70px;width:300px;text-align:center;top:340.21px;font-size:9.5px;color:#4d4c4b;font-weight:normal;transform:scaleX(0.8400);transform-origin:50% 0;">200</div>
<div class="t" style="left:170.88px;width:300px;text-align:center;top:340.21px;font-size:9.5px;color:#4d4c4b;font-weight:normal;transform:scaleX(0.8400);transform-origin:50% 0;">250</div>
<div class="t" style="left:216.05px;width:300px;text-align:center;top:340.21px;font-size:9.5px;color:#4d4c4b;font-weight:normal;transform:scaleX(0.8400);transform-origin:50% 0;">300</div>
<div class="t" style="left:-211.00px;width:300px;text-align:right;top:221.51px;font-size:9.5px;color:#4d4c4b;font-weight:normal;transform:scaleX(0.8400);transform-origin:100% 0;">UK</div>
<div class="t" style="left:384.40px;top:221.71px;font-size:9.5px;color:#252423;font-weight:normal;transform:scaleX(0.8400);transform-origin:0 0;">315</div>
<div class="t" style="left:-211.00px;width:300px;text-align:right;top:244.81px;font-size:9.5px;color:#4d4c4b;font-weight:normal;transform:scaleX(0.8400);transform-origin:100% 0;">USA</div>
<div class="t" style="left:375.37px;top:245.01px;font-size:9.5px;color:#252423;font-weight:normal;transform:scaleX(0.8400);transform-origin:0 0;">305</div>
<div class="t" style="left:-211.00px;width:300px;text-align:right;top:268.11px;font-size:9.5px;color:#4d4c4b;font-weight:normal;transform:scaleX(0.8400);transform-origin:100% 0;">Australia</div>
<div class="t" style="left:336.52px;top:268.31px;font-size:9.5px;color:#252423;font-weight:normal;transform:scaleX(0.8400);transform-origin:0 0;">262</div>
<div class="t" style="left:-211.00px;width:300px;text-align:right;top:291.41px;font-size:9.5px;color:#4d4c4b;font-weight:normal;transform:scaleX(0.8400);transform-origin:100% 0;">France</div>
<div class="t" style="left:277.79px;top:291.61px;font-size:9.5px;color:#252423;font-weight:normal;transform:scaleX(0.8400);transform-origin:0 0;">197</div>
<div class="t" style="left:-211.00px;width:300px;text-align:right;top:314.71px;font-size:9.5px;color:#4d4c4b;font-weight:normal;transform:scaleX(0.8400);transform-origin:100% 0;">UAE</div>
<div class="t" style="left:236.23px;top:314.91px;font-size:9.5px;color:#252423;font-weight:normal;transform:scaleX(0.8400);transform-origin:0 0;">151</div>
<div class="t" style="left:96.60px;width:300px;text-align:center;top:351.71px;font-size:9.5px;color:#4d4c4b;font-weight:normal;transform:scaleX(0.8872);transform-origin:50% 0;">Sum of Loyalty Points</div>
<div class="t" style="left:-54.00px;top:262.30px;width:200px;height:12px;line-height:12px;text-align:center;font-size:9.5px;color:#4d4c4b;transform:rotate(-90deg) scaleX(0.8738);transform-origin:100px 6px;">Country Name</div>
<div class="t" style="left:424.60px;top:188.95px;font-size:11.7px;color:#252423;font-weight:normal;transform:scaleX(0.9505);transform-origin:0 0;-webkit-text-stroke:0.2px #252423">Quantity Sold by Product</div>
<div class="t" style="left:289.50px;width:300px;text-align:center;top:296.01px;font-size:9.5px;color:#4d4c4b;font-weight:normal;transform:scaleX(0.8400);transform-origin:50% 0;">0</div>
<div class="t" style="left:289.50px;width:300px;text-align:center;top:269.61px;font-size:9.5px;color:#4d4c4b;font-weight:normal;transform:scaleX(0.8400);transform-origin:50% 0;">2</div>
<div class="t" style="left:289.50px;width:300px;text-align:center;top:243.21px;font-size:9.5px;color:#4d4c4b;font-weight:normal;transform:scaleX(0.8400);transform-origin:50% 0;">4</div>
<div class="t" style="left:289.50px;width:300px;text-align:center;top:216.81px;font-size:9.5px;color:#4d4c4b;font-weight:normal;transform:scaleX(0.8400);transform-origin:50% 0;">6</div>
<div class="t" style="left:306.95px;width:300px;text-align:center;top:209.11px;font-size:9.5px;color:#252423;font-weight:normal;transform:scaleX(0.8400);transform-origin:50% 0;">6</div>
<div class="t" style="left:376.95px;top:295px;width:80px;height:10px;font-size:9.2px;line-height:10px;color:#4d4c4b;text-align:right;transform:rotate(-90deg) scaleX(0.87);transform-origin:80px 5px;">Floral ...</div>
<div class="t" style="left:318.92px;width:300px;text-align:center;top:209.11px;font-size:9.5px;color:#252423;font-weight:normal;transform:scaleX(0.8400);transform-origin:50% 0;">6</div>
<div class="t" style="left:388.92px;top:295px;width:80px;height:10px;font-size:9.2px;line-height:10px;color:#4d4c4b;text-align:right;transform:rotate(-90deg) scaleX(0.87);transform-origin:80px 5px;">Porcelai...</div>
<div class="t" style="left:330.89px;width:300px;text-align:center;top:209.11px;font-size:9.5px;color:#252423;font-weight:normal;transform:scaleX(0.8400);transform-origin:50% 0;">6</div>
<div class="t" style="left:400.89px;top:295px;width:80px;height:10px;font-size:9.2px;line-height:10px;color:#4d4c4b;text-align:right;transform:rotate(-90deg) scaleX(0.87);transform-origin:80px 5px;">ProCar...</div>
<div class="t" style="left:342.86px;width:300px;text-align:center;top:222.31px;font-size:9.5px;color:#252423;font-weight:normal;transform:scaleX(0.8400);transform-origin:50% 0;">5</div>
<div class="t" style="left:412.86px;top:295px;width:80px;height:10px;font-size:9.2px;line-height:10px;color:#4d4c4b;text-align:right;transform:rotate(-90deg) scaleX(0.87);transform-origin:80px 5px;">Compo...</div>
<div class="t" style="left:354.83px;width:300px;text-align:center;top:222.31px;font-size:9.5px;color:#252423;font-weight:normal;transform:scaleX(0.8400);transform-origin:50% 0;">5</div>
<div class="t" style="left:424.83px;top:295px;width:80px;height:10px;font-size:9.2px;line-height:10px;color:#4d4c4b;text-align:right;transform:rotate(-90deg) scaleX(0.87);transform-origin:80px 5px;">Electric ...</div>
<div class="t" style="left:366.80px;width:300px;text-align:center;top:222.31px;font-size:9.5px;color:#252423;font-weight:normal;transform:scaleX(0.8400);transform-origin:50% 0;">5</div>
<div class="t" style="left:436.80px;top:295px;width:80px;height:10px;font-size:9.2px;line-height:10px;color:#4d4c4b;text-align:right;transform:rotate(-90deg) scaleX(0.87);transform-origin:80px 5px;">ProTile ...</div>
<div class="t" style="left:378.77px;width:300px;text-align:center;top:222.31px;font-size:9.5px;color:#252423;font-weight:normal;transform:scaleX(0.8400);transform-origin:50% 0;">5</div>
<div class="t" style="left:448.77px;top:295px;width:80px;height:10px;font-size:9.2px;line-height:10px;color:#4d4c4b;text-align:right;transform:rotate(-90deg) scaleX(0.87);transform-origin:80px 5px;">Rose G...</div>
<div class="t" style="left:390.74px;width:300px;text-align:center;top:222.31px;font-size:9.5px;color:#252423;font-weight:normal;transform:scaleX(0.8400);transform-origin:50% 0;">5</div>
<div class="t" style="left:460.74px;top:295px;width:80px;height:10px;font-size:9.2px;line-height:10px;color:#4d4c4b;text-align:right;transform:rotate(-90deg) scaleX(0.87);transform-origin:80px 5px;">Steel La...</div>
<div class="t" style="left:402.71px;width:300px;text-align:center;top:222.31px;font-size:9.5px;color:#252423;font-weight:normal;transform:scaleX(0.8400);transform-origin:50% 0;">5</div>
<div class="t" style="left:472.71px;top:295px;width:80px;height:10px;font-size:9.2px;line-height:10px;color:#4d4c4b;text-align:right;transform:rotate(-90deg) scaleX(0.87);transform-origin:80px 5px;">Woven ...</div>
<div class="t" style="left:414.68px;width:300px;text-align:center;top:235.51px;font-size:9.5px;color:#252423;font-weight:normal;transform:scaleX(0.8400);transform-origin:50% 0;">4</div>
<div class="t" style="left:484.68px;top:295px;width:80px;height:10px;font-size:9.2px;line-height:10px;color:#4d4c4b;text-align:right;transform:rotate(-90deg) scaleX(0.87);transform-origin:80px 5px;">Bambo...</div>
<div class="t" style="left:426.65px;width:300px;text-align:center;top:235.51px;font-size:9.5px;color:#252423;font-weight:normal;transform:scaleX(0.8400);transform-origin:50% 0;">4</div>
<div class="t" style="left:496.65px;top:295px;width:80px;height:10px;font-size:9.2px;line-height:10px;color:#4d4c4b;text-align:right;transform:rotate(-90deg) scaleX(0.87);transform-origin:80px 5px;">Cordles...</div>
<div class="t" style="left:438.62px;width:300px;text-align:center;top:235.51px;font-size:9.5px;color:#252423;font-weight:normal;transform:scaleX(0.8400);transform-origin:50% 0;">4</div>
<div class="t" style="left:508.62px;top:295px;width:80px;height:10px;font-size:9.2px;line-height:10px;color:#4d4c4b;text-align:right;transform:rotate(-90deg) scaleX(0.87);transform-origin:80px 5px;">Garden ...</div>
<div class="t" style="left:450.59px;width:300px;text-align:center;top:235.51px;font-size:9.5px;color:#252423;font-weight:normal;transform:scaleX(0.8400);transform-origin:50% 0;">4</div>
<div class="t" style="left:520.59px;top:295px;width:80px;height:10px;font-size:9.2px;line-height:10px;color:#4d4c4b;text-align:right;transform:rotate(-90deg) scaleX(0.87);transform-origin:80px 5px;">LED Gar...</div>
<div class="t" style="left:462.56px;width:300px;text-align:center;top:235.51px;font-size:9.5px;color:#252423;font-weight:normal;transform:scaleX(0.8400);transform-origin:50% 0;">4</div>
<div class="t" style="left:532.56px;top:295px;width:80px;height:10px;font-size:9.2px;line-height:10px;color:#4d4c4b;text-align:right;transform:rotate(-90deg) scaleX(0.87);transform-origin:80px 5px;">Modern...</div>
<div class="t" style="left:474.53px;width:300px;text-align:center;top:235.51px;font-size:9.5px;color:#252423;font-weight:normal;transform:scaleX(0.8400);transform-origin:50% 0;">4</div>
<div class="t" style="left:544.53px;top:295px;width:80px;height:10px;font-size:9.2px;line-height:10px;color:#4d4c4b;text-align:right;transform:rotate(-90deg) scaleX(0.87);transform-origin:80px 5px;">Modula...</div>
<div class="t" style="left:486.50px;width:300px;text-align:center;top:235.51px;font-size:9.5px;color:#252423;font-weight:normal;transform:scaleX(0.8400);transform-origin:50% 0;">4</div>
<div class="t" style="left:556.50px;top:295px;width:80px;height:10px;font-size:9.2px;line-height:10px;color:#4d4c4b;text-align:right;transform:rotate(-90deg) scaleX(0.87);transform-origin:80px 5px;">Patio C...</div>
<div class="t" style="left:498.47px;width:300px;text-align:center;top:235.51px;font-size:9.5px;color:#252423;font-weight:normal;transform:scaleX(0.8400);transform-origin:50% 0;">4</div>
<div class="t" style="left:568.47px;top:295px;width:80px;height:10px;font-size:9.2px;line-height:10px;color:#4d4c4b;text-align:right;transform:rotate(-90deg) scaleX(0.87);transform-origin:80px 5px;">Solar O...</div>
<div class="t" style="left:510.44px;width:300px;text-align:center;top:248.71px;font-size:9.5px;color:#252423;font-weight:normal;transform:scaleX(0.8400);transform-origin:50% 0;">3</div>
<div class="t" style="left:580.44px;top:295px;width:80px;height:10px;font-size:9.2px;line-height:10px;color:#4d4c4b;text-align:right;transform:rotate(-90deg) scaleX(0.87);transform-origin:80px 5px;">Brass C...</div>
<div class="t" style="left:522.41px;width:300px;text-align:center;top:248.71px;font-size:9.5px;color:#252423;font-weight:normal;transform:scaleX(0.8400);transform-origin:50% 0;">3</div>
<div class="t" style="left:592.41px;top:295px;width:80px;height:10px;font-size:9.2px;line-height:10px;color:#4d4c4b;text-align:right;transform:rotate(-90deg) scaleX(0.87);transform-origin:80px 5px;">Cerami...</div>
<div class="t" style="left:534.38px;width:300px;text-align:center;top:248.71px;font-size:9.5px;color:#252423;font-weight:normal;transform:scaleX(0.8400);transform-origin:50% 0;">3</div>
<div class="t" style="left:604.38px;top:295px;width:80px;height:10px;font-size:9.2px;line-height:10px;color:#4d4c4b;text-align:right;transform:rotate(-90deg) scaleX(0.87);transform-origin:80px 5px;">Design...</div>
<div class="t" style="left:546.35px;width:300px;text-align:center;top:248.71px;font-size:9.5px;color:#252423;font-weight:normal;transform:scaleX(0.8400);transform-origin:50% 0;">3</div>
<div class="t" style="left:616.35px;top:295px;width:80px;height:10px;font-size:9.2px;line-height:10px;color:#4d4c4b;text-align:right;transform:rotate(-90deg) scaleX(0.87);transform-origin:80px 5px;">Kitchen...</div>
<div class="t" style="left:558.32px;width:300px;text-align:center;top:248.71px;font-size:9.5px;color:#252423;font-weight:normal;transform:scaleX(0.8400);transform-origin:50% 0;">3</div>
<div class="t" style="left:628.32px;top:295px;width:80px;height:10px;font-size:9.2px;line-height:10px;color:#4d4c4b;text-align:right;transform:rotate(-90deg) scaleX(0.87);transform-origin:80px 5px;">Lumino...</div>
<div class="t" style="left:570.29px;width:300px;text-align:center;top:248.71px;font-size:9.5px;color:#252423;font-weight:normal;transform:scaleX(0.8400);transform-origin:50% 0;">3</div>
<div class="t" style="left:640.29px;top:295px;width:80px;height:10px;font-size:9.2px;line-height:10px;color:#4d4c4b;text-align:right;transform:rotate(-90deg) scaleX(0.87);transform-origin:80px 5px;">Luxury ...</div>
<div class="t" style="left:582.26px;width:300px;text-align:center;top:248.71px;font-size:9.5px;color:#252423;font-weight:normal;transform:scaleX(0.8400);transform-origin:50% 0;">3</div>
<div class="t" style="left:652.26px;top:295px;width:80px;height:10px;font-size:9.2px;line-height:10px;color:#4d4c4b;text-align:right;transform:rotate(-90deg) scaleX(0.87);transform-origin:80px 5px;">Marble ...</div>
<div class="t" style="left:594.23px;width:300px;text-align:center;top:248.71px;font-size:9.5px;color:#252423;font-weight:normal;transform:scaleX(0.8400);transform-origin:50% 0;">3</div>
<div class="t" style="left:664.23px;top:295px;width:80px;height:10px;font-size:9.2px;line-height:10px;color:#4d4c4b;text-align:right;transform:rotate(-90deg) scaleX(0.87);transform-origin:80px 5px;">Motion ...</div>
<div class="t" style="left:606.20px;width:300px;text-align:center;top:248.71px;font-size:9.5px;color:#252423;font-weight:normal;transform:scaleX(0.8400);transform-origin:50% 0;">3</div>
<div class="t" style="left:676.20px;top:295px;width:80px;height:10px;font-size:9.2px;line-height:10px;color:#4d4c4b;text-align:right;transform:rotate(-90deg) scaleX(0.87);transform-origin:80px 5px;">Oakwo...</div>
<div class="t" style="left:618.17px;width:300px;text-align:center;top:248.71px;font-size:9.5px;color:#252423;font-weight:normal;transform:scaleX(0.8400);transform-origin:50% 0;">3</div>
<div class="t" style="left:688.17px;top:295px;width:80px;height:10px;font-size:9.2px;line-height:10px;color:#4d4c4b;text-align:right;transform:rotate(-90deg) scaleX(0.87);transform-origin:80px 5px;">Organic...</div>
<div class="t" style="left:630.14px;width:300px;text-align:center;top:248.71px;font-size:9.5px;color:#252423;font-weight:normal;transform:scaleX(0.8400);transform-origin:50% 0;">3</div>
<div class="t" style="left:700.14px;top:295px;width:80px;height:10px;font-size:9.2px;line-height:10px;color:#4d4c4b;text-align:right;transform:rotate(-90deg) scaleX(0.87);transform-origin:80px 5px;">Terracot...</div>
<div class="t" style="left:468.30px;width:300px;text-align:center;top:348.01px;font-size:9.5px;color:#4d4c4b;font-weight:normal;transform:scaleX(0.8780);transform-origin:50% 0;">Product Name</div>
<div class="t" style="left:330.50px;top:244.00px;width:200px;height:12px;line-height:12px;text-align:center;font-size:9.5px;color:#4d4c4b;transform:rotate(-90deg) scaleX(0.8458);transform-origin:100px 6px;">Sum of Quantity Purcha...</div>
<div class="t" style="left:41.00px;top:372.22px;font-size:11.5px;color:#252423;font-weight:normal;transform:scaleX(0.9787);transform-origin:0 0;-webkit-text-stroke:0.2px #252423">Median Sales Distribution by Country</div>
<div class="t" style="left:261.60px;top:450.71px;font-size:9.5px;color:#252423;font-weight:normal;transform:scaleX(0.8466);transform-origin:0 0;">$680.785 (45.07%)</div>
<div class="t" style="left:108.50px;top:396.91px;font-size:9.5px;color:#252423;font-weight:normal;transform:scaleX(0.8414);transform-origin:0 0;">$144 (9.53%)</div>
<div class="t" style="left:54.70px;top:427.01px;font-size:9.5px;color:#252423;font-weight:normal;transform:scaleX(0.8342);transform-origin:0 0;">$221.85 (14.69%)</div>
<div class="t" style="left:63.20px;top:488.01px;font-size:9.5px;color:#252423;font-weight:normal;transform:scaleX(0.8376);transform-origin:0 0;">$230 (15.23%)</div>
<div class="t" style="left:112.30px;top:526.01px;font-size:9.5px;color:#252423;font-weight:normal;transform:scaleX(0.8376);transform-origin:0 0;">$234 (15.49%)</div>
<div class="t" style="left:331.60px;top:419.67px;font-size:9.6px;color:#252423;font-weight:bold;transform:scaleX(0.9815);transform-origin:0 0;">Country Name</div>
<div class="t" style="left:339.60px;top:433.67px;font-size:10.2px;color:#252423;font-weight:normal;transform:scaleX(0.7824);transform-origin:0 0;">UAE</div>
<div class="t" style="left:339.60px;top:450.12px;font-size:10.2px;color:#252423;font-weight:normal;transform:scaleX(0.8961);transform-origin:0 0;">Australia</div>
<div class="t" style="left:342.40px;top:466.57px;font-size:10.2px;color:#252423;font-weight:normal;transform:scaleX(0.8186);transform-origin:0 0;">USA</div>
<div class="t" style="left:342.40px;top:483.02px;font-size:10.2px;color:#252423;font-weight:normal;transform:scaleX(0.8385);transform-origin:0 0;">France</div>
<div class="t" style="left:342.40px;top:499.47px;font-size:10.2px;color:#252423;font-weight:normal;transform:scaleX(0.8182);transform-origin:0 0;">UK</div>
<div class="t" style="left:767.5px;top:185px;width:80px;height:14px;line-height:14px;text-align:center;font-size:14.6px;color:#252423;-webkit-text-stroke:0.3px #252423;transform:rotate(90deg);transform-origin:40px 7px;">Filters</div>
<div class="t" style="left:830.00px;top:133.95px;font-size:14px;color:#252423;font-weight:bold;transform:scaleX(0.9667);transform-origin:0 0;">Visualizations</div>
<div class="t" style="left:830.00px;top:157.66px;font-size:10.5px;color:#252423;font-weight:bold;transform:scaleX(0.9817);transform-origin:0 0;">Format visual</div>
<div class="t" style="left:856.00px;top:229.64px;font-size:12px;color:#605e5c;font-weight:normal;transform:scaleX(0.9989);transform-origin:0 0;">Search</div>
<div class="t" style="left:834.00px;top:266.34px;font-size:12px;color:#3b3a39;font-weight:normal;transform:scaleX(1.0166);transform-origin:0 0;">Visual</div>
<div class="t" style="left:882.40px;top:266.34px;font-size:12px;color:#252423;font-weight:normal;transform:scaleX(1.0206);transform-origin:0 0;-webkit-text-stroke:0.3px currentColor">General</div>
<div class="t" style="left:845.40px;top:309.58px;font-size:11.3px;color:#323130;font-weight:normal;transform:scaleX(0.9820);transform-origin:0 0;-webkit-text-stroke:0.3px currentColor">Properties</div>
<div class="t" style="left:845.00px;top:346.91px;font-size:11.8px;color:#252423;font-weight:normal;transform:scaleX(0.9620);transform-origin:0 0;-webkit-text-stroke:0.3px currentColor">Title</div>
<div class="t" style="left:955.00px;top:347.05px;font-size:8.5px;color:#ffffff;font-weight:normal;">On</div>
<div class="t" style="left:853.00px;top:390.91px;font-size:11.8px;color:#252423;font-weight:normal;transform:scaleX(0.9391);transform-origin:0 0;-webkit-text-stroke:0.3px currentColor">Title</div>
<div class="t" style="left:838.00px;top:416.19px;font-size:11px;color:#484644;font-weight:normal;">Text</div>
<div class="t" style="left:812.00px;width:300px;text-align:center;top:437.65px;font-size:14px;color:#323130;font-weight:normal;font-family:'Liberation Serif',serif"><i>fx</i></div>
<div class="r" style="left:839px;top:428px;width:105px;height:20px;overflow:hidden"><div class="t" style="left:5px;top:10.2px;font-size:11px;color:#323130">Median Sales Distribution</div></div>
<div class="t" style="left:838.00px;top:464.19px;font-size:11px;color:#484644;font-weight:normal;">Heading</div>
<div class="t" style="left:846.00px;top:486.19px;font-size:11px;color:#323130;font-weight:normal;">Heading 3</div>
<div class="t" style="left:838.00px;top:511.19px;font-size:11px;color:#484644;font-weight:normal;">Font</div>
<div class="t" style="left:846.00px;top:533.53px;font-size:10px;color:#323130;font-weight:normal;">DIN</div>
<div class="t" style="left:928.50px;top:533.19px;font-size:11px;color:#323130;font-weight:normal;">16</div>
<div class="t" style="left:698.50px;width:300px;text-align:center;top:558.58px;font-size:14.2px;color:#1b1a19;font-weight:bold;">B</div>
<div class="t" style="left:723.00px;width:300px;text-align:center;top:557.65px;font-size:14px;color:#252423;font-weight:normal;font-family:'Liberation Serif',serif"><i>I</i></div>
<div class="t" style="left:748.50px;width:300px;text-align:center;top:558.62px;font-size:13.5px;color:#252423;font-weight:normal;"><u>U</u></div>
<div class="t" style="left:838.00px;top:587.19px;font-size:11px;color:#484644;font-weight:normal;">Text color</div>
<div class="t" style="left:996.00px;top:134.15px;font-size:14px;color:#252423;font-weight:bold;transform:scaleX(0.9688);transform-origin:0 0;">Data</div>
<div class="t" style="left:1018.00px;top:171.14px;font-size:12px;color:#605e5c;font-weight:normal;transform:scaleX(0.9989);transform-origin:0 0;">Search</div>
<div class="t" style="left:1058.00px;top:192.68px;font-size:11.3px;color:#484644;font-weight:normal;transform:scaleX(0.9612);transform-origin:0 0;">Country Name</div>
<div class="t" style="left:1058.00px;top:214.61px;font-size:11.3px;color:#484644;font-weight:normal;transform:scaleX(0.9197);transform-origin:0 0;">Exchange Currency</div>
<div class="t" style="left:1058.00px;top:236.54px;font-size:11.3px;color:#484644;font-weight:normal;transform:scaleX(0.9057);transform-origin:0 0;">Exchange Rate</div>
<div class="t" style="left:1058.00px;top:258.47px;font-size:11.3px;color:#484644;font-weight:normal;transform:scaleX(0.9275);transform-origin:0 0;">Gross Product Price</div>
<div class="t" style="left:1058.00px;top:280.40px;font-size:11.3px;color:#484644;font-weight:normal;transform:scaleX(0.9041);transform-origin:0 0;">Gross Revenue</div>
<div class="t" style="left:1058.00px;top:302.33px;font-size:11.3px;color:#484644;font-weight:normal;transform:scaleX(0.9006);transform-origin:0 0;">Gross Revenue USD</div>
<div class="t" style="left:1058.00px;top:324.26px;font-size:11.3px;color:#484644;font-weight:normal;transform:scaleX(0.9244);transform-origin:0 0;">Median Sales</div>
<div class="t" style="left:1058.00px;top:346.19px;font-size:11.3px;color:#484644;font-weight:normal;transform:scaleX(0.9297);transform-origin:0 0;">Net Revenue</div>
<div class="t" style="left:1058.00px;top:368.12px;font-size:11.3px;color:#484644;font-weight:normal;transform:scaleX(0.9145);transform-origin:0 0;">Net Revenue USD</div>
<div class="t" style="left:1058.00px;top:390.05px;font-size:11.3px;color:#484644;font-weight:normal;transform:scaleX(0.9634);transform-origin:0 0;">Product Category</div>
<div class="t" style="left:1058.00px;top:411.98px;font-size:11.3px;color:#484644;font-weight:normal;transform:scaleX(0.9707);transform-origin:0 0;">Product Description</div>
<div class="t" style="left:1058.00px;top:433.91px;font-size:11.3px;color:#484644;font-weight:normal;transform:scaleX(0.9597);transform-origin:0 0;">Product Name</div>
<div class="t" style="left:1058.00px;top:455.84px;font-size:11.3px;color:#484644;font-weight:normal;transform:scaleX(0.9499);transform-origin:0 0;">Quantity Purchased</div>
<div class="t" style="left:1058.00px;top:477.77px;font-size:11.3px;color:#484644;font-weight:normal;transform:scaleX(0.9738);transform-origin:0 0;">Quarterly Profit</div>
<div class="t" style="left:1058.00px;top:499.70px;font-size:11.3px;color:#484644;font-weight:normal;transform:scaleX(0.9204);transform-origin:0 0;">Tax Per Product</div>
<div class="t" style="left:1058.00px;top:521.63px;font-size:11.3px;color:#484644;font-weight:normal;transform:scaleX(0.9232);transform-origin:0 0;">Total Tax</div>
<div class="t" style="left:1058.00px;top:543.56px;font-size:11.3px;color:#484644;font-weight:normal;transform:scaleX(0.9102);transform-origin:0 0;">Total Tax USD</div>
<div class="t" style="left:1058.00px;top:565.49px;font-size:11.3px;color:#484644;font-weight:normal;transform:scaleX(0.9674);transform-origin:0 0;">Yearly Profit Margin</div>
<div class="t" style="left:1058.00px;top:587.42px;font-size:11.3px;color:#484644;font-weight:normal;transform:scaleX(0.9406);transform-origin:0 0;">YTD Profit</div>
<div class="t" style="left:92.80px;top:590.29px;font-size:11px;color:#252423;font-weight:normal;transform:scaleX(0.9680);transform-origin:0 0;-webkit-text-stroke:0.3px currentColor">Sales Overview</div>
</body></html>
